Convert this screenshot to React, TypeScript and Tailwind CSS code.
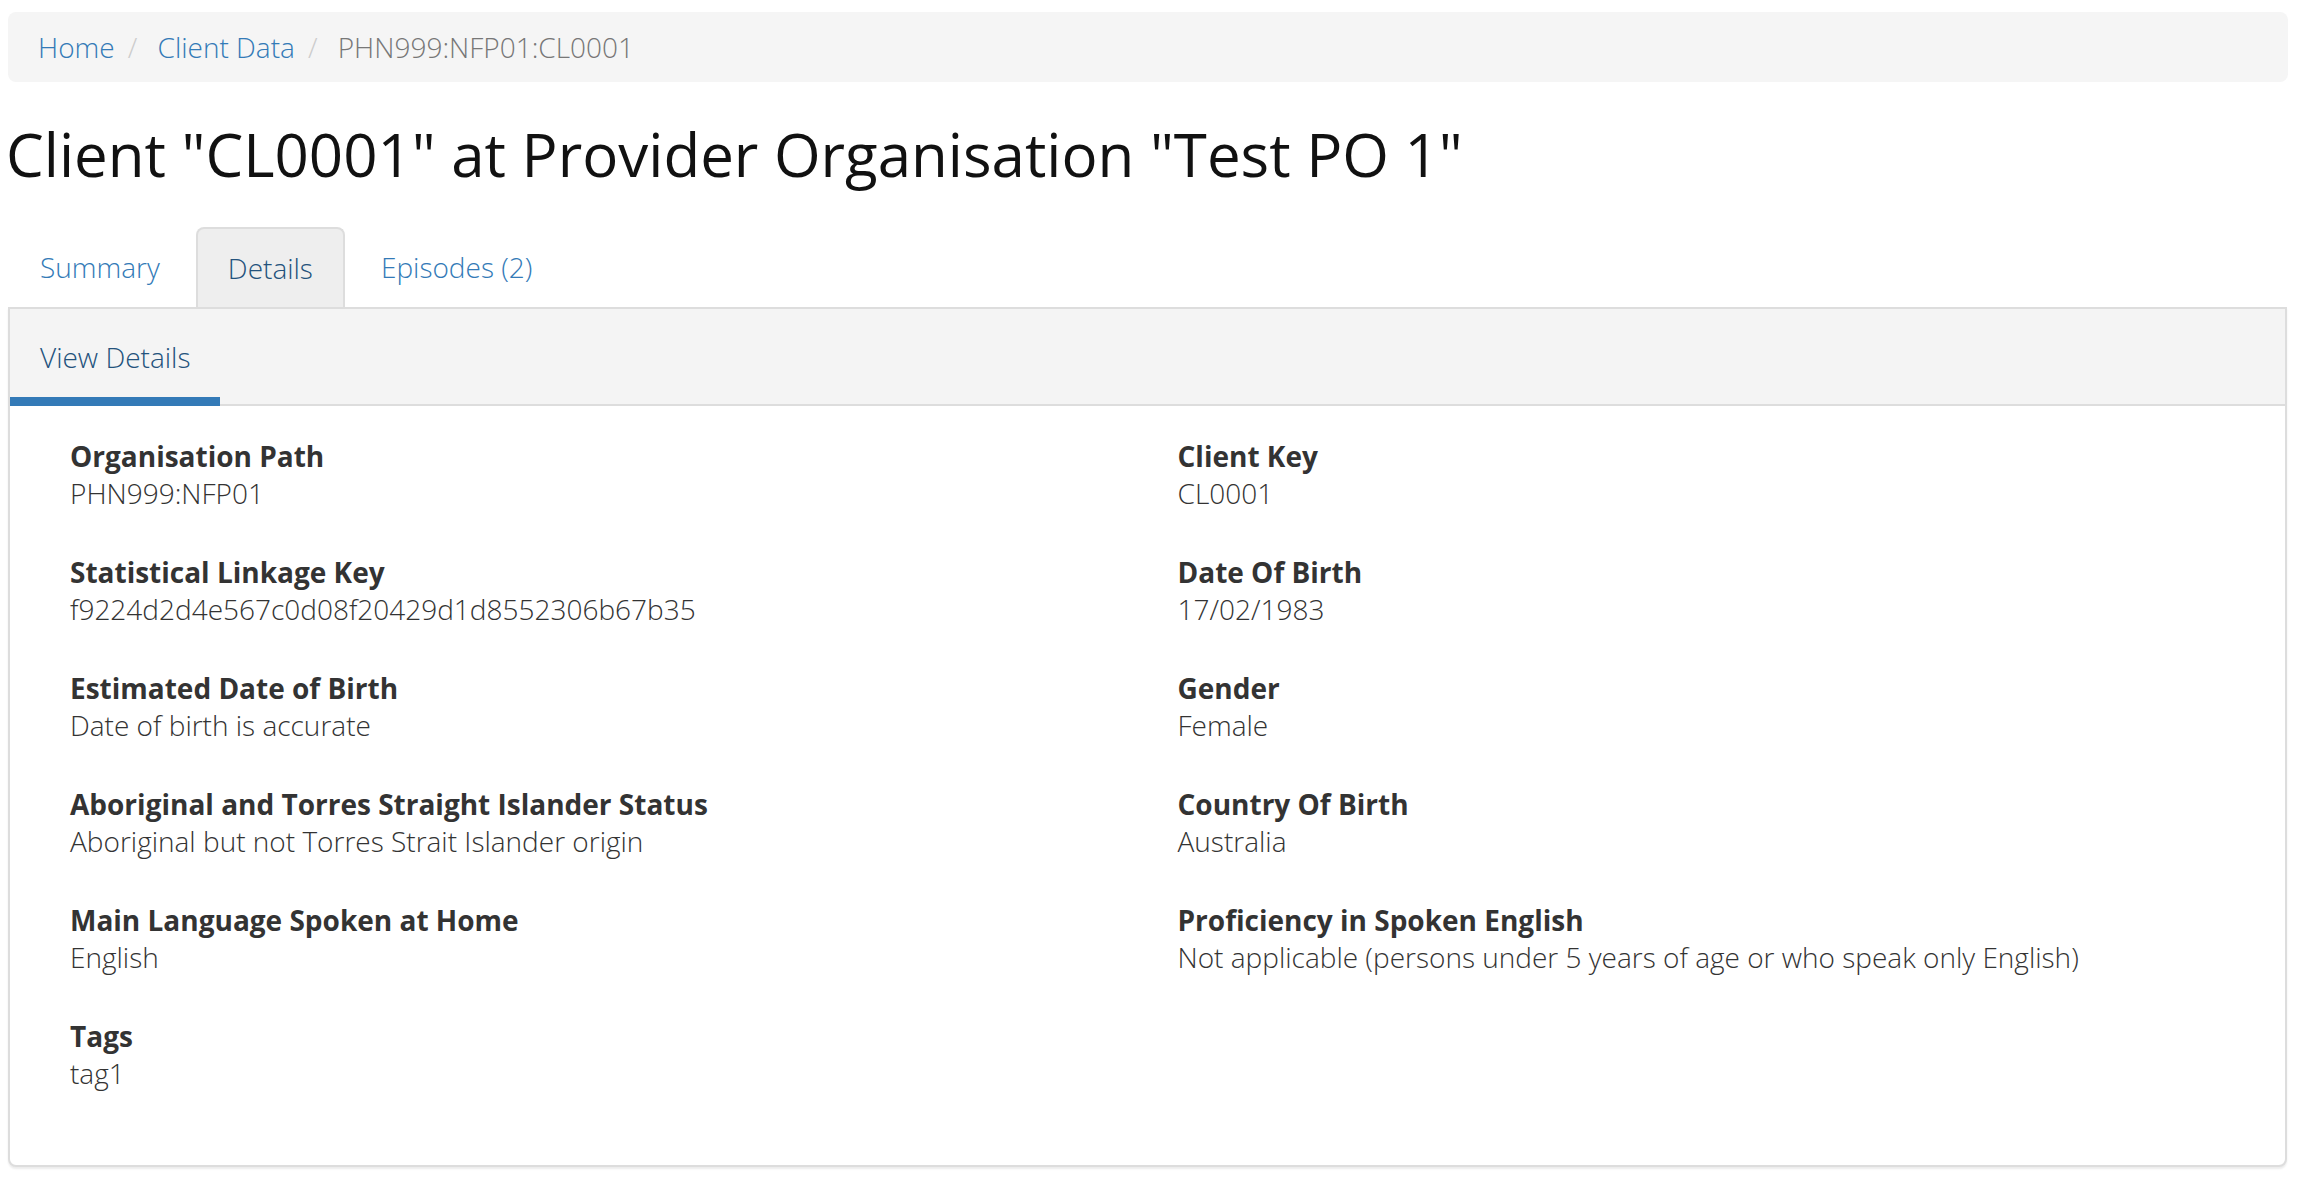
import React from "react";

interface Field {
  label: string;
  value: string;
}

const rows: [Field, Field | null][] = [
  [
    { label: "Organisation Path", value: "PHN999:NFP01" },
    { label: "Client Key", value: "CL0001" },
  ],
  [
    { label: "Statistical Linkage Key", value: "f9224d2d4e567c0d08f20429d1d8552306b67b35" },
    { label: "Date Of Birth", value: "17/02/1983" },
  ],
  [
    { label: "Estimated Date of Birth", value: "Date of birth is accurate" },
    { label: "Gender", value: "Female" },
  ],
  [
    { label: "Aboriginal and Torres Straight Islander Status", value: "Aboriginal but not Torres Strait Islander origin" },
    { label: "Country Of Birth", value: "Australia" },
  ],
  [
    { label: "Main Language Spoken at Home", value: "English" },
    {
      label: "Proficiency in Spoken English",
      value: "Not applicable (persons under 5 years of age or who speak only English)",
    },
  ],
  [{ label: "Tags", value: "tag1" }, null],
];

function FieldBlock({ field }: { field: Field | null }) {
  if (!field) return <div className="px-[30px]" />;
  return (
    <div className="px-[30px] mb-[39px]">
      <div className="font-bold text-[28px] leading-[40px] text-[#333]">{field.label}</div>
      <div className="-mt-[3px] font-light text-[28px] leading-[40px] text-[#333]">{field.value}</div>
    </div>
  );
}

function Breadcrumb() {
  const sep = <span className="px-[13px] text-[#ccc]">/&nbsp;</span>;
  return (
    <ol className="flex items-center ml-[8px] mr-[14px] h-[70px] px-[30px] rounded-[8px] bg-[#f5f5f5] text-[28px] leading-[40px] font-light">
      <li>
        <a href="#" className="text-[#337ab7]">Home</a>
      </li>
      <li className="flex">
        {sep}
        <a href="#" className="text-[#337ab7]">Client Data</a>
      </li>
      <li className="flex text-[#777]">
        {sep}
        <span>PHN999:NFP01:CL0001</span>
      </li>
    </ol>
  );
}

function Tabs() {
  return (
    <ul className="flex ml-[8px] mt-[39px] text-[28px] leading-[40px] font-light">
      <li className="mr-[4px]">
        <a href="#" className="flex items-center h-[80px] px-[32px] text-[#337ab7]">Summary</a>
      </li>
      <li className="mr-[4px]">
        <a
          href="#"
          className="flex items-center h-[80px] px-[30px] bg-[#eeeeee] border-2 border-b-0 border-[#ddd] rounded-t-[8px] text-[#23527c]"
        >
          Details
        </a>
      </li>
      <li>
        <a href="#" className="flex items-center h-[80px] px-[32px] text-[#337ab7]">Episodes (2)</a>
      </li>
    </ul>
  );
}

export default function App() {
  return (
    <div className="min-h-screen bg-white pt-[12px] font-['Open_Sans',_'Liberation_Sans',_sans-serif]">
      <Breadcrumb />
      <h1 className="ml-[6px] mt-[38px] text-[60px] leading-[68px] font-normal text-[#111]">
        Client "CL0001" at Provider Organisation "Test PO 1"
      </h1>
      <Tabs />
      <div className="ml-[8px] mr-[15px] border-2 border-[#ddd] rounded-b-[8px] bg-white shadow-[0_2px_2px_rgba(0,0,0,0.08)]">
        <div className="flex bg-[#f4f4f4] border-b-2 border-[#ddd] h-[97px]">
          <div className="relative flex items-center px-[30px] text-[28px] leading-[40px] font-light text-[#23527c]">
            View Details
            <span className="absolute left-0 right-0 bottom-[-2px] h-[9px] bg-[#337ab7]" />
          </div>
        </div>
        <div className="px-[30px] pt-[30px] pb-[33px]">
          <div className="grid grid-cols-2">
            {rows.map(([left, right], i) => (
              <React.Fragment key={i}>
                <FieldBlock field={left} />
                <FieldBlock field={right} />
              </React.Fragment>
            ))}
          </div>
        </div>
      </div>
    </div>
  );
}
